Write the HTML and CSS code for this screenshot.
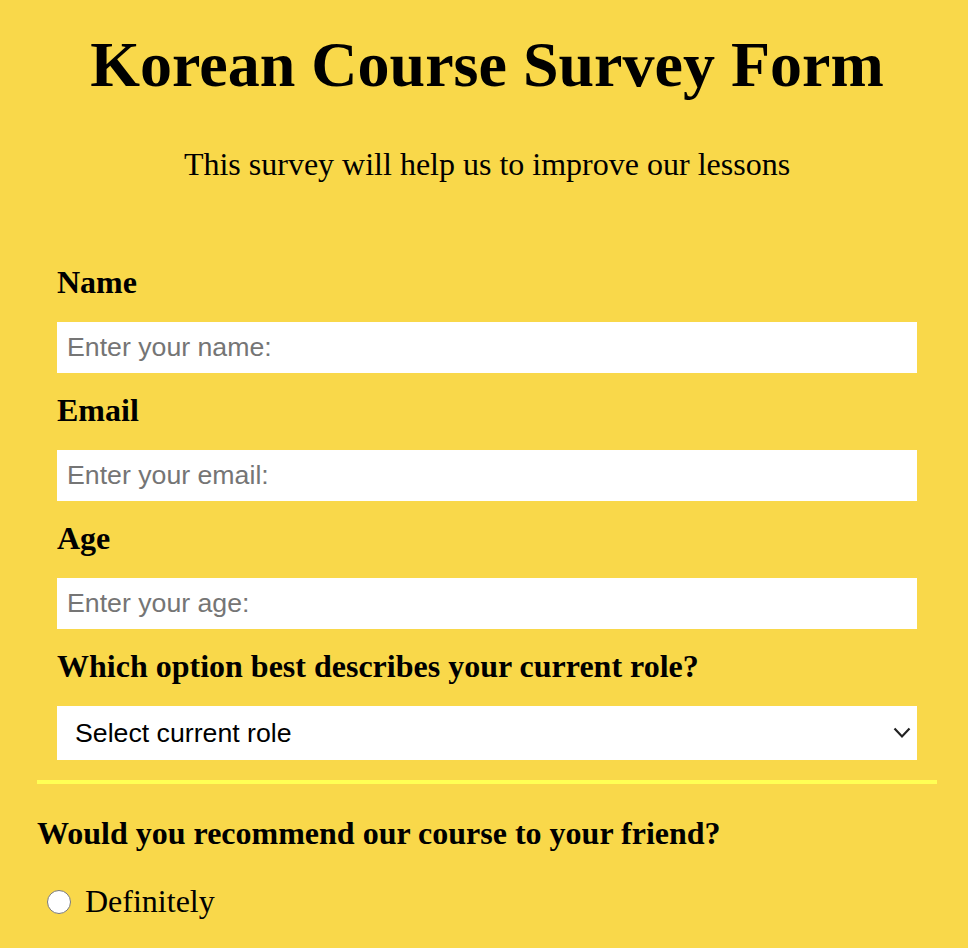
FILE: index.html
```html
<!DOCTYPE html>
<html lang="en">
<head>
<meta charset="utf-8">
<title>Korean Course Survey Form</title>
<link rel="stylesheet" href="styles.css">
</head>
<body>
<div class="page">
  <h1 class="title">Korean Course Survey Form</h1>
  <p class="description">This survey will help us to improve our lessons</p>
  <form class="survey">
    <div class="fields">
      <div class="group">
        <label class="label" for="name">Name</label>
        <input class="field" id="name" type="text" placeholder="Enter your name:">
      </div>
      <div class="group">
        <label class="label" for="email">Email</label>
        <input class="field" id="email" type="email" placeholder="Enter your email:">
      </div>
      <div class="group">
        <label class="label" for="age">Age</label>
        <input class="field" id="age" type="number" placeholder="Enter your age:">
      </div>
      <div class="group">
        <label class="label" for="role">Which option best describes your current role?</label>
        <div class="select-wrap">
          <select class="select" id="role">
            <option>Select current role</option>
          </select>
          <svg class="chevron" width="18" height="12" viewBox="0 0 18 12"><path d="M1.5 1.5 L9 9.5 L16.5 1.5" fill="none" stroke="#222" stroke-width="2.2"/></svg>
        </div>
      </div>
    </div>
    <hr class="divider">
    <p class="question">Would you recommend our course to your friend?</p>
    <label class="radio-row"><span class="radio"></span><span class="radio-text">Definitely</span></label>
  </form>
</div>
</body>
</html>
```
FILE: styles.css
```css
html, body {
  margin: 0;
  padding: 0;
}
body {
  background: #f9d84a;
  font-family: "Liberation Serif", "Times New Roman", serif;
  color: #000;
}
.page {
  width: 900px;
  margin-left: 37px;
  padding-top: 29px;
}
.title {
  margin: 0;
  font-size: 64px;
  line-height: 71px;
  text-align: center;
  font-weight: bold;
}
.description {
  margin: 46px 0 0;
  font-size: 32px;
  line-height: 37px;
  text-align: center;
}
.survey {
  margin: 0;
}
.fields {
  padding: 0 20px;
  margin-top: 81px;
}
.group {
  display: flex;
  flex-direction: column;
}
.group + .group {
  margin-top: 19px;
}
.label {
  font-size: 32px;
  font-weight: bold;
  line-height: 37px;
  margin-bottom: 21px;
}
.field {
  height: 51px;
  border: none;
  padding: 0 10px;
  margin: 0;
  font-family: "Liberation Sans", Arial, sans-serif;
  font-size: 26.7px;
  background: #fff;
  color: #000;
  outline: none;
}
.field::placeholder {
  color: #757575;
}
.select-wrap {
  position: relative;
  height: 54px;
}
.select {
  appearance: none;
  -webkit-appearance: none;
  width: 100%;
  height: 54px;
  border: none;
  margin: 0;
  padding: 0 18px;
  font-family: "Liberation Sans", Arial, sans-serif;
  font-size: 26.7px;
  background: #fff;
  color: #000;
}
.chevron {
  position: absolute;
  right: 6px;
  top: 21px;
}
.divider {
  margin: 20px 0 0;
  border: none;
  height: 4px;
  background: #ffff55;
}
.question {
  margin: 31px 0 0;
  font-size: 32px;
  font-weight: bold;
  line-height: 37px;
}
.radio-row {
  display: flex;
  align-items: center;
  margin-top: 31px;
  padding-left: 10px;
  gap: 14px;
}
.radio {
  width: 22px;
  height: 22px;
  border: 1.5px solid #7a7a7a;
  border-radius: 50%;
  background: #fff;
}
.radio-text {
  font-size: 32px;
  line-height: 37px;
}
```
